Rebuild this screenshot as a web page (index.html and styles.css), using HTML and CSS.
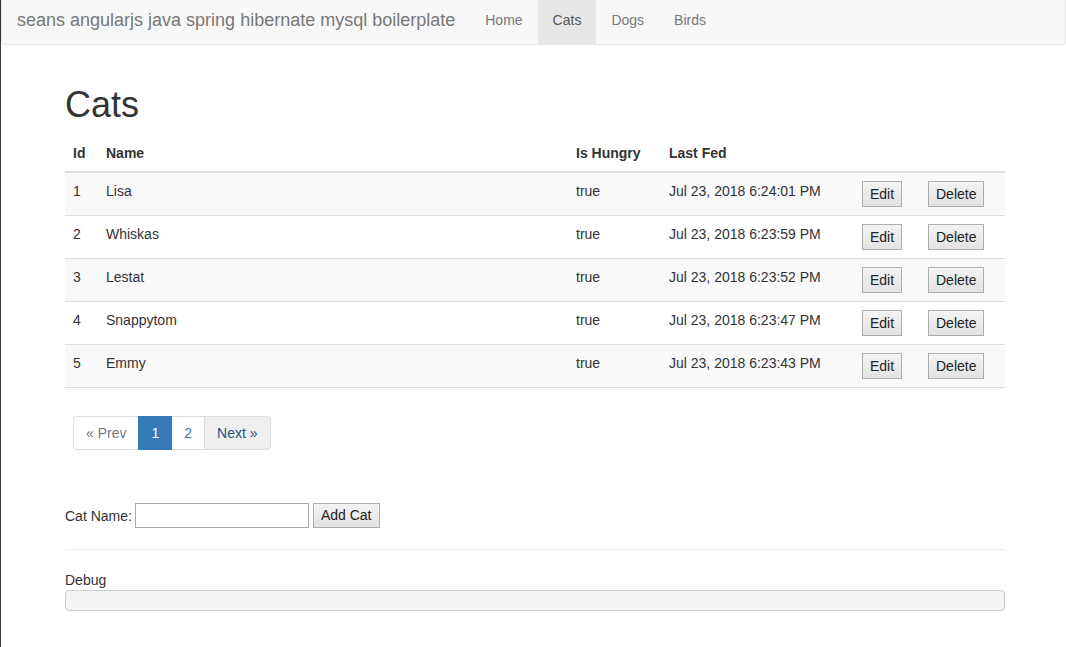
FILE: index.html
```html
<!DOCTYPE html>
<html>
<head>
<meta charset="utf-8">
<title>Cats</title>
<link rel="stylesheet" href="styles.css">
</head>
<body>
<nav class="navbar">
  <a class="brand" href="#">seans angularjs java spring hibernate mysql boilerplate</a>
  <ul class="nav">
    <li><a href="#">Home</a></li>
    <li class="active"><a href="#">Cats</a></li>
    <li><a href="#">Dogs</a></li>
    <li><a href="#">Birds</a></li>
  </ul>
</nav>
<main class="container">
  <h1 class="title">Cats</h1>
  <table class="table">
    <colgroup>
      <col class="c-id"><col class="c-name"><col class="c-hungry"><col class="c-fed"><col class="c-edit"><col class="c-del">
    </colgroup>
    <thead>
      <tr><th>Id</th><th>Name</th><th>Is Hungry</th><th>Last Fed</th><th></th><th></th></tr>
    </thead>
    <tbody>
      <tr><td>1</td><td>Lisa</td><td>true</td><td>Jul 23, 2018 6:24:01 PM</td><td><button class="btn">Edit</button></td><td><button class="btn">Delete</button></td></tr>
      <tr><td>2</td><td>Whiskas</td><td>true</td><td>Jul 23, 2018 6:23:59 PM</td><td><button class="btn">Edit</button></td><td><button class="btn">Delete</button></td></tr>
      <tr><td>3</td><td>Lestat</td><td>true</td><td>Jul 23, 2018 6:23:52 PM</td><td><button class="btn">Edit</button></td><td><button class="btn">Delete</button></td></tr>
      <tr><td>4</td><td>Snappytom</td><td>true</td><td>Jul 23, 2018 6:23:47 PM</td><td><button class="btn">Edit</button></td><td><button class="btn">Delete</button></td></tr>
      <tr><td>5</td><td>Emmy</td><td>true</td><td>Jul 23, 2018 6:23:43 PM</td><td><button class="btn">Edit</button></td><td><button class="btn">Delete</button></td></tr>
    </tbody>
  </table>
  <ul class="pagination">
    <li class="disabled"><a href="#">« Prev</a></li>
    <li class="active"><a href="#">1</a></li>
    <li><a href="#">2</a></li>
    <li class="hover"><a href="#">Next »</a></li>
  </ul>
  <form class="add-form">
    <label class="add-label">Cat Name:</label>
    <input class="add-input" type="text">
    <button class="btn add-btn" type="button">Add Cat</button>
  </form>
  <hr class="sep">
  <div class="debug-label">Debug</div>
  <pre class="debug"></pre>
</main>
</body>
</html>
```
FILE: styles.css
```css
* { box-sizing: border-box; }
html, body { margin: 0; padding: 0; }
body {
  font-family: "Liberation Sans", Arial, sans-serif;
  font-size: 14px;
  line-height: 20px;
  color: #333;
  background: #fff;
  border-left: 1px solid #3c3c3c;
  min-height: 647px;
}
a { text-decoration: none; }

.navbar {
  display: flex;
  height: 45px;
  background: #f8f8f8;
  border: 1px solid #e7e7e7;
  border-top: 0;
  border-radius: 0 0 4px 4px;
  margin-bottom: 20px;
}
.brand {
  display: block;
  padding: 10px 15px 14px;
  font-size: 18px;
  line-height: 20px;
  color: #777;
}
.nav {
  display: flex;
  list-style: none;
  margin: 0;
  padding: 0;
}
.nav a {
  display: block;
  padding: 10px 15px 14px;
  line-height: 20px;
  color: #777;
}
.nav .active a {
  background: #e7e7e7;
  color: #555;
}

.container {
  display: flow-root;
  width: 940px;
  margin-left: 64px;
}
.title {
  font-size: 36px;
  font-weight: 500;
  line-height: 1.1;
  margin: 20px 0 10px;
}

.table {
  width: 100%;
  border-collapse: collapse;
  table-layout: fixed;
  margin: 0;
}
.c-id { width: 33px; }
.c-name { width: 470px; }
.c-hungry { width: 93px; }
.c-fed { width: 193px; }
.c-edit { width: 66px; }
.c-del { width: 85px; }
.table th {
  text-align: left;
  padding: 8px;
  line-height: 20px;
  font-weight: bold;
  vertical-align: bottom;
  border-bottom: 2px solid #ddd;
}
.table td {
  padding: 8px;
  line-height: 20px;
  vertical-align: top;
  border-top: 1px solid #ddd;
}
.table tbody tr:nth-child(odd) { background: #f9f9f9; }
.table tbody tr:last-child td { border-bottom: 1px solid #ddd; }

.btn {
  display: inline-block;
  vertical-align: top;
  font-family: "Liberation Sans", Arial, sans-serif;
  font-size: 14px;
  line-height: 20px;
  color: #222;
  padding: 2px 7px;
  border: 1px solid #adadad;
  background: linear-gradient(#f3f3f3, #e3e3e3);
  border-radius: 0;
  margin: 0;
}

.pagination {
  display: flex;
  list-style: none;
  margin: 28px 0 0 8px;
  padding: 0;
}
.pagination li a {
  display: block;
  padding: 6px 12px;
  line-height: 20px;
  border: 1px solid #ddd;
  margin-left: -1px;
  color: #337ab7;
  background: #fff;
}
.pagination li:first-child a {
  margin-left: 0;
  border-radius: 4px 0 0 4px;
}
.pagination li:last-child a { border-radius: 0 4px 4px 0; }
.pagination .disabled a { color: #777; }
.pagination .active a {
  background: #337ab7;
  border-color: #337ab7;
  color: #fff;
  position: relative;
}
.pagination .hover a {
  background: #eee;
  color: #23527c;
}

.add-form {
  display: flex;
  align-items: center;
  margin: 53px 0 0;
  height: 26px;
}
.add-label { margin-right: 3px; }
.add-input {
  width: 174px;
  height: 25px;
  border: 1px solid #a9a9a9;
  padding: 1px 2px;
  font: 14px "Liberation Sans", Arial, sans-serif;
  margin: 0 4px 0 0;
}
.add-btn {
  height: 25px;
  line-height: 19px;
  padding: 2px 7px;
}

.sep {
  border: 0;
  border-top: 1px solid #eee;
  margin: 20px 0;
  height: 0;
}
.debug-label { line-height: 20px; }
.debug {
  margin: 0;
  height: 21px;
  background: #f5f5f5;
  border: 1px solid #ccc;
  border-radius: 4px;
  padding: 9.5px;
}
```
